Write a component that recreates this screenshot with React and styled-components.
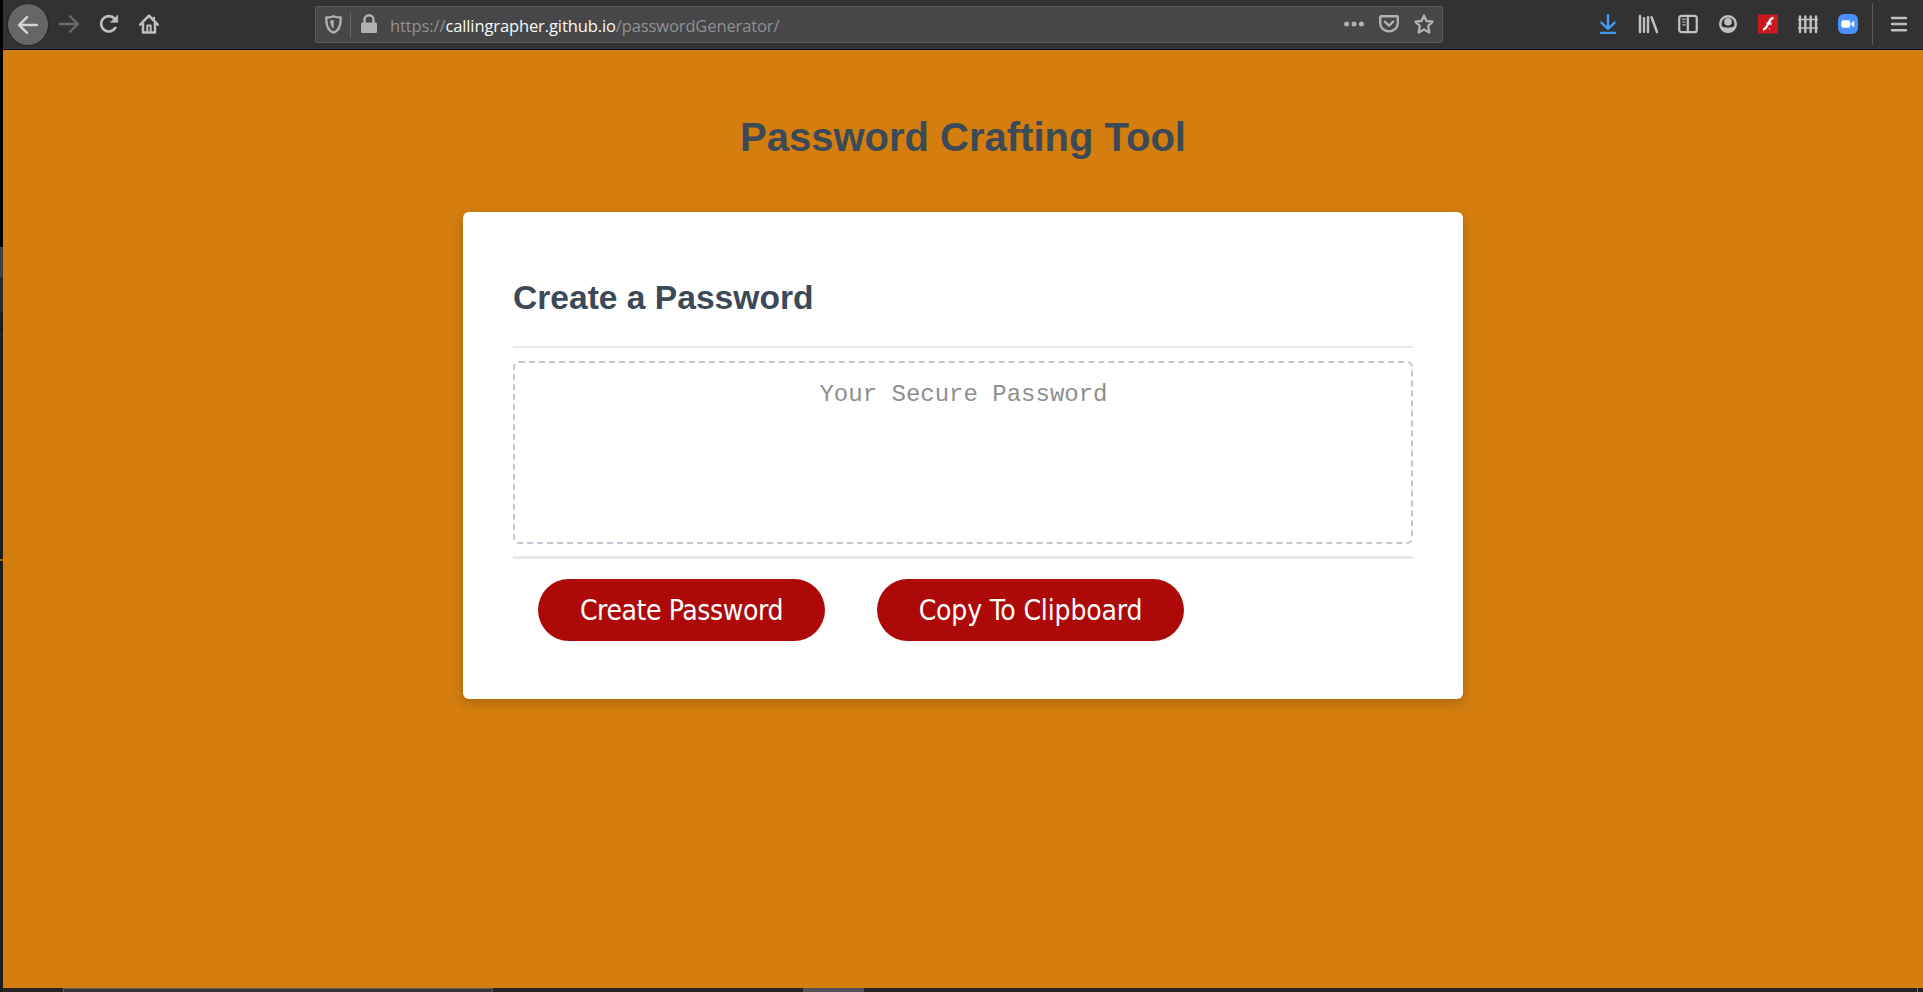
import React from "react";
import styled, { createGlobalStyle } from "styled-components";

const GlobalStyle = createGlobalStyle`
  * { box-sizing: border-box; }
  html, body { margin: 0; padding: 0; overflow: hidden; }
`;

const Screen = styled.div`
  display: flex;
  width: 1923px;
  height: 992px;
  overflow: hidden;
  background: #d37e0e;
`;

const DesktopEdge = styled.div`
  display: flex;
  flex-direction: column;
  flex: none;
  width: 3px;
  background: #1d1d1e;
`;

const EdgeBand = styled.div`
  flex: none;
  height: ${(p) => p.$height}px;
  background: ${(p) => p.$color};
`;

const Browser = styled.div`
  display: flex;
  flex-direction: column;
  flex: 1;
  min-width: 0;
`;

const Toolbar = styled.header`
  display: flex;
  align-items: flex-start;
  flex: none;
  height: 50px;
  background: #323234;
  border-bottom: 1px solid #0c0c0d;
`;

const NavButtons = styled.nav`
  display: flex;
  width: 312px;
  padding: 4px 0 0 5px;
`;

const NavButton = styled.button`
  display: flex;
  align-items: center;
  justify-content: center;
  width: 40px;
  height: 40px;
  padding: 0;
  border: 0;
  background: none;
  color: ${(p) => (p.$dim ? "#6b6b6c" : "#bfbfc0")};
`;

const BackButton = styled(NavButton)`
  height: 41px;
  margin-right: 1px;
  border-radius: 50%;
  background: #666667;
  color: #d3d3d4;
  box-shadow: 0 0 0 1px #272729;
`;

const UrlBar = styled.div`
  display: flex;
  align-items: center;
  width: 1128px;
  height: 37px;
  margin-top: 6px;
  border: 1px solid #5b5b5e;
  border-radius: 2px;
  background: #474749;
  color: #b1b1b3;
`;

const UrlIcon = styled.span`
  display: flex;
  justify-content: center;
  width: ${(p) => p.$width || 35}px;
  padding-bottom: 1px;
`;

const UrlDivider = styled.span`
  width: 1px;
  height: 26px;
  background: #65656a;
`;

const Address = styled.div`
  flex: 1;
  padding: 2px 0 0 3px;
  font: 16.5px/24px "Open Sans", "Noto Sans", sans-serif;
  letter-spacing: -0.11px;
  color: #919192;
  white-space: nowrap;
`;

const Host = styled.span`
  color: #f9f9fa;
`;

const ToolbarActions = styled.div`
  display: flex;
  align-items: center;
  height: 48px;
  margin-left: auto;
  color: #bfbfc0;
`;

const Action = styled.span`
  display: flex;
  justify-content: center;
  width: 40px;
`;

const DownloadAction = styled(Action)`
  color: #409bf5;
`;

const ActionDivider = styled.span`
  width: 1px;
  height: 42px;
  margin-left: 4px;
  background: #5a5a5c;
`;

const MenuAction = styled(Action)`
  width: 50px;
  padding-left: 2px;
`;

const Page = styled.main`
  display: flex;
  flex-direction: column;
  align-items: center;
  flex: 1;
  background: #d37e0e;
  color: #3c4a57;
  font-family: "Liberation Sans", Arial, sans-serif;
`;

const Title = styled.h1`
  margin: 64px 0 52px;
  font-size: 40px;
  line-height: 46px;
  font-weight: 700;
`;

const Card = styled.section`
  width: 1000px;
  height: 487px;
  padding: 50px;
  border-radius: 6px;
  background: #fff;
  box-shadow: 0 4px 12px rgba(0, 0, 0, 0.2);
`;

const CardTitle = styled.h2`
  height: 86px;
  margin: 0;
  padding-top: 17px;
  border-bottom: 2px solid #e7e8ea;
  font-size: 33.6px;
  line-height: 38px;
  font-weight: 700;
`;

const PasswordField = styled.textarea`
  display: block;
  width: 900px;
  height: 183px;
  margin: 13px 0 12px;
  padding: 18px 19px 20px 20px;
  border: 2px dashed #c0c7d0;
  border-radius: 6px;
  outline: 0;
  resize: none;
  background: #fff;
  font: 24px/27px "Liberation Mono", "Courier New", monospace;
  text-align: center;
  &::placeholder { color: #8e8e8e; opacity: 1; }
`;

const CardFooter = styled.div`
  display: flex;
  gap: 52px;
  padding: 20px 25px 0;
  border-top: 3px solid #e7e8ea;
`;

const PillButton = styled.button`
  width: ${(p) => p.$width}px;
  height: 62px;
  padding: 2px 0 0;
  border: 0;
  border-radius: 31px;
  background: #ae0909;
  color: #fff;
  font: 28px/34px "DejaVu Sans Condensed", "DejaVu Sans", Tahoma, sans-serif;
  font-stretch: condensed;
  letter-spacing: ${(p) => p.$tracking}px;
  white-space: nowrap;
`;

const Taskbar = styled.footer`
  display: flex;
  flex: none;
  height: 4px;
  background: #242127;
`;

const TaskSegment = styled.span`
  width: ${(p) => p.$width}px;
  background: ${(p) => p.$color};
  border: ${(p) => (p.$outlined ? "1px solid #5c5c5c" : "0")};
  border-bottom: 0;
`;

const ShowDesktopDivider = styled.span`
  width: 1px;
  margin: 0 5px 0 auto;
  background: #77757a;
`;

const Icon = ({ size = 20, children, sw = 2.2 }) => (
  <svg width={size} height={size} viewBox="0 0 20 20" fill="none" stroke="currentColor"
    strokeWidth={sw} strokeLinecap="round" strokeLinejoin="round">{children}</svg>
);

export default function App() {
  return (
    <>
      <GlobalStyle />
      <Screen>
        <DesktopEdge>
          <EdgeBand $height={247} $color="#000" />
          <EdgeBand $height={30} $color="#414142" />
          <EdgeBand $height={35} $color="#29292a" />
          <EdgeBand $height={22} $color="#1d1d1e" />
          <EdgeBand $height={1} $color="#333334" />
          <EdgeBand $height={224} $color="#1d1d1e" />
          <EdgeBand $height={2} $color="#a15f18" />
        </DesktopEdge>
        <Browser>
          <Toolbar>
            <NavButtons>
              <BackButton aria-label="Back">
                <Icon sw={2.5}><path d="M18.8 10H1.5M9 2.2L1.2 10L9 17.800" /></Icon>
              </BackButton>
              <NavButton $dim aria-label="Forward">
                <Icon sw={2.3}><path d="M1 10H18.5M11 2.200L18.8 10L11 17.800" /></Icon>
              </NavButton>
              <NavButton aria-label="Reload">
                <Icon sw={2.7}>
                  <path d="M16.4 13.8A7.7 7.7 0 1 1 15.6 4.7" />
                  <path d="M18.7 1.3V8.2H11.8Z" fill="currentColor" strokeWidth="0.7" />
                </Icon>
              </NavButton>
              <NavButton aria-label="Home">
                <Icon sw={2.5}>
                  <path d="M1.2 10.7L10 1.6L18.8 10.7M4 9V18.6H16V9" />
                  <path d="M8.3 18V11.5H11.7V18M15 3.5V6" strokeWidth="2" />
                </Icon>
              </NavButton>
            </NavButtons>
            <UrlBar>
              <UrlIcon $width={34}>
                <svg width="17" height="19" viewBox="0 0 17 19" fill="none" stroke="currentColor" strokeWidth="2.4" strokeLinejoin="round">
                  <path d="M8.5 1.2C6.5 2.2 4 2.5 1.3 2.5C1 10 2.5 15.5 8.5 17.7C14.5 15.5 16 10 15.7 2.5C13 2.5 10.5 2.2 8.5 1.2Z" />
                  <path d="M8.7 5L5.3 5.5C5.3 9.5 6.2 12.3 8.7 13.5Z" fill="currentColor" stroke="none" />
                </svg>
              </UrlIcon>
              <UrlDivider />
              <UrlIcon $width={36}>
                <svg width="16" height="20" viewBox="0 0 16 20" fill="none" stroke="currentColor" strokeWidth="2.5">
                  <path d="M3.5 9V5.8A4.5 4.5 0 0 1 12.5 5.8V9" />
                  <rect x="0" y="8.5" width="16" height="10.5" rx="1.5" fill="currentColor" stroke="none" />
                </svg>
              </UrlIcon>
              <Address>https://<Host>callingrapher.github.io</Host>/passwordGenerator/</Address>
              <UrlIcon $width={35}>
                <svg width="20" height="6" viewBox="0 0 20 6" fill="currentColor">
                  <circle cx="2.6" cy="3" r="2.5" /><circle cx="10" cy="3" r="2.5" /><circle cx="17.4" cy="3" r="2.5" />
                </svg>
              </UrlIcon>
              <UrlIcon $width={35}>
                <Icon sw={2.4}><path d="M2 2.2H18Q18.800 2.200 18.800 3V9A8.8 8.4 0 0 1 1.2 9V3Q1.200 2.200 2 2.200ZM5.8 7.7L10 11.7L14.2 7.7" /></Icon>
              </UrlIcon>
              <UrlIcon $width={36}>
                <Icon sw={2.3}>
                  <path d="M10 1.5L12.5 7L18.7 7.7L14.2 12L15.3 18.5L10 15.5L4.7 18.5L5.8 12L1.3 7.7L7.5 7Z" />
                </Icon>
              </UrlIcon>
            </UrlBar>
            <ToolbarActions>
              <DownloadAction>
                <Icon sw={2.4}><path d="M10 1.2V14.5M3.5 8.7L10 15L16.5 8.7M3.2 18.9H16.8" /></Icon>
              </DownloadAction>
              <Action>
                <Icon sw={2.5}>
                  <path d="M2 2V18M10 3.2V18M13.500 3.2L19 18" /><path d="M6 4.2V18" strokeWidth="2.300" />
                </Icon>
              </Action>
              <Action>
                <Icon sw={2.3}>
                  <rect x="1.2" y="1.8" width="17.6" height="16.4" rx="2.5" />
                  <path d="M9.8 2V18" /><path d="M4.3 5.2H7.2M4.3 8H7.2M4.8 10.8H7.2" strokeWidth="1.2" />
                </Icon>
              </Action>
              <Action>
                <Icon sw={2.5}>
                  <circle cx="10" cy="10" r="7.8" />
                  <circle cx="10" cy="7.800" r="3.8" fill="currentColor" stroke="none" />
                  <path d="M3.3 12C6 14.3 14 14.3 16.7 12C15.5 16 13 17.5 10 17.5S4.5 16 3.3 12Z" fill="currentColor" stroke="none" />
                </Icon>
              </Action>
              <Action>
                <svg width="20" height="20" viewBox="0 0 20 20">
                  <rect y="0.5" width="20" height="19" fill="#cb1720" />
                  <path d="M15.5 4C10 3.5 11 14.8 5 15.5M8.500 9.5H13.5" fill="none" stroke="#fff" strokeWidth="2.3" />
                  <circle cx="11.5" cy="15" r="0.8" fill="#f3a6a9" />
                </svg>
              </Action>
              <Action>
                <Icon sw={2}>
                  <path d="M2 2.500V18M7.3 2.500V18M12.700 2.500V18M18 2.500V18" strokeWidth="2.5" />
                  <path d="M0.5 5.5H19.5M0.5 14H19.5" strokeWidth="1.7" />
                </Icon>
              </Action>
              <Action>
                <svg width="20" height="20" viewBox="0 0 20 20">
                  <rect width="20" height="20" rx="6" fill="#4a91fb" />
                  <rect x="3.3" y="6.3" width="9" height="7.4" rx="1.8" fill="#fff" />
                  <path d="M13 9.2L16.3 6.8V13.2L13 10.8Z" fill="#fff" />
                </svg>
              </Action>
              <ActionDivider />
              <MenuAction>
                <Icon sw={2.4}><path d="M3 4H17M3 10H17M3 16.3H17" /></Icon>
              </MenuAction>
            </ToolbarActions>
          </Toolbar>
          <Page>
            <Title>Password Crafting Tool</Title>
            <Card>
              <CardTitle>Create a Password</CardTitle>
              <PasswordField readOnly placeholder="Your Secure Password" />
              <CardFooter>
                <PillButton $width={287} $tracking={-0.4}>Create Password</PillButton>
                <PillButton $width={307} $tracking={-0.15}>Copy To Clipboard</PillButton>
              </CardFooter>
            </Card>
          </Page>
          <Taskbar>
            <TaskSegment $width={60} $color="#2a2325" />
            <TaskSegment $width={430} $color="#343633" $outlined />
            <TaskSegment $width={310} $color="#292228" />
            <TaskSegment $width={61} $color="#565058" />
            <ShowDesktopDivider />
          </Taskbar>
        </Browser>
      </Screen>
    </>
  );
}
